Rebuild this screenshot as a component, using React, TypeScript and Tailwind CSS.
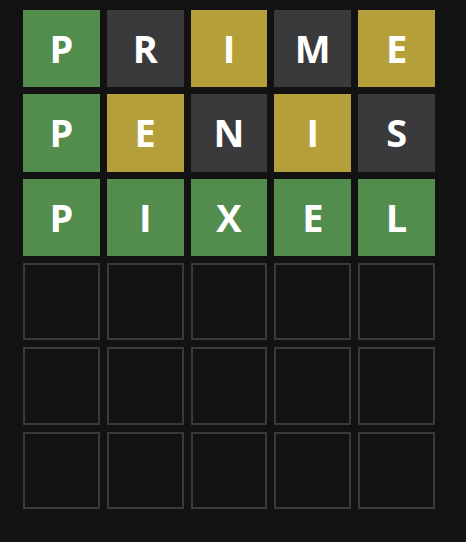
const rows: { letter: string; state: "correct" | "present" | "absent" }[][] = [
  [
    { letter: "P", state: "correct" },
    { letter: "R", state: "absent" },
    { letter: "I", state: "present" },
    { letter: "M", state: "absent" },
    { letter: "E", state: "present" },
  ],
  [
    { letter: "P", state: "correct" },
    { letter: "E", state: "present" },
    { letter: "N", state: "absent" },
    { letter: "I", state: "present" },
    { letter: "S", state: "absent" },
  ],
  [
    { letter: "P", state: "correct" },
    { letter: "I", state: "correct" },
    { letter: "X", state: "correct" },
    { letter: "E", state: "correct" },
    { letter: "L", state: "correct" },
  ],
];

const stateClass = {
  correct: "bg-[#538d4e]",
  present: "bg-[#b59f3b]",
  absent: "bg-[#3a3a3c]",
};

export default function App() {
  const empty = Array.from({ length: 3 }, () => Array.from({ length: 5 }));

  return (
    <div className="w-[466px] h-[542px] bg-[#121213] pt-[10px] pl-[23px] font-['Open_Sans',sans-serif]">
      <div className="grid grid-cols-5 grid-rows-6 gap-[7px] w-[412px] h-[499px]">
        {rows.map((row, r) =>
          row.map((tile, c) => (
            <div
              key={`${r}-${c}`}
              className={`flex items-center justify-center text-white text-[38px] font-bold ${stateClass[tile.state]}`}
            >
              {tile.letter}
            </div>
          ))
        )}
        {empty.map((row, r) =>
          row.map((_, c) => (
            <div key={`e-${r}-${c}`} className="border-2 border-[#3a3a3c]" />
          ))
        )}
      </div>
    </div>
  );
}
